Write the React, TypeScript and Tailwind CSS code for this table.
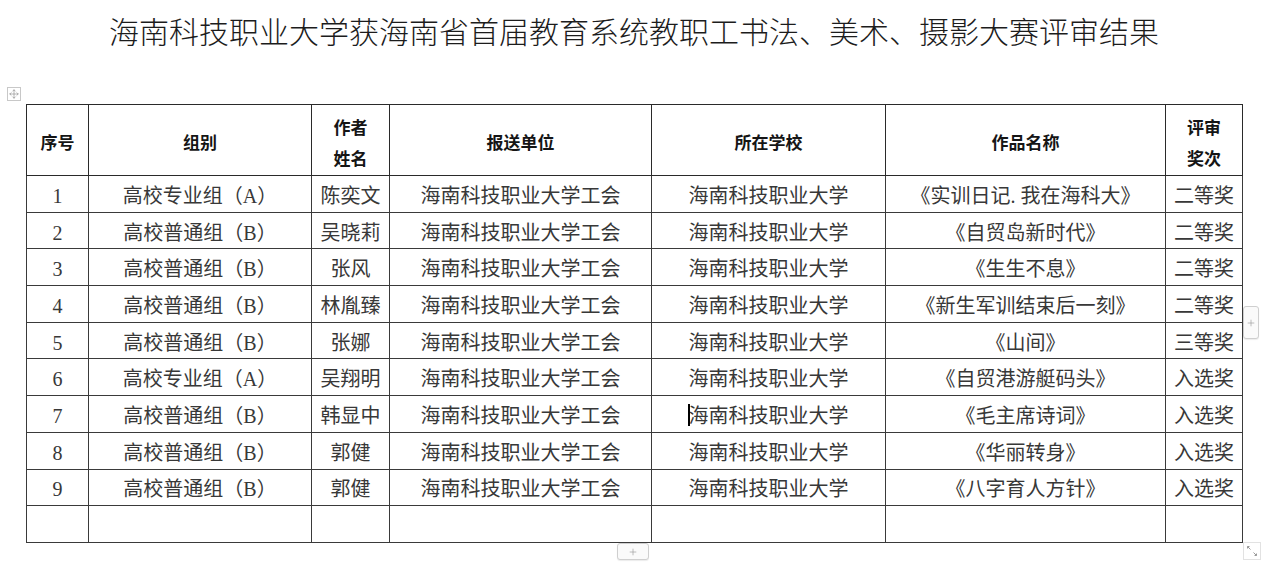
import { Move, Plus } from "lucide-react";

const rows = [
  { no: "1", group: "高校专业组（A）", name: "陈奕文", unit: "海南科技职业大学工会", school: "海南科技职业大学", work: "《实训日记. 我在海科大》", prize: "二等奖" },
  { no: "2", group: "高校普通组（B）", name: "吴晓莉", unit: "海南科技职业大学工会", school: "海南科技职业大学", work: "《自贸岛新时代》", prize: "二等奖" },
  { no: "3", group: "高校普通组（B）", name: "张风", unit: "海南科技职业大学工会", school: "海南科技职业大学", work: "《生生不息》", prize: "二等奖" },
  { no: "4", group: "高校普通组（B）", name: "林胤臻", unit: "海南科技职业大学工会", school: "海南科技职业大学", work: "《新生军训结束后一刻》", prize: "二等奖" },
  { no: "5", group: "高校普通组（B）", name: "张娜", unit: "海南科技职业大学工会", school: "海南科技职业大学", work: "《山间》", prize: "三等奖" },
  { no: "6", group: "高校专业组（A）", name: "吴翔明", unit: "海南科技职业大学工会", school: "海南科技职业大学", work: "《自贸港游艇码头》", prize: "入选奖" },
  { no: "7", group: "高校普通组（B）", name: "韩显中", unit: "海南科技职业大学工会", school: "海南科技职业大学", work: "《毛主席诗词》", prize: "入选奖" },
  { no: "8", group: "高校普通组（B）", name: "郭健", unit: "海南科技职业大学工会", school: "海南科技职业大学", work: "《华丽转身》", prize: "入选奖" },
  { no: "9", group: "高校普通组（B）", name: "郭健", unit: "海南科技职业大学工会", school: "海南科技职业大学", work: "《八字育人方针》", prize: "入选奖" },
];

const th = "border border-[#2a2a2a] pt-[7px] pb-0 text-center align-middle font-bold text-[17px] leading-[31px] text-[#151515]";
const td = "border border-[#3a3a3a] pt-[4px] pb-0 px-0 h-[36.7px] text-center align-middle text-[20px] leading-[24px] text-[#383838]";

export default function App() {
  return (
    <div
      className="min-h-[569px] w-[1268px] bg-white"
      style={{ fontFamily: '"Liberation Serif", "Noto Sans CJK SC", serif' }}
    >
      <h1
        className="pt-[10px] text-center text-[30px] leading-[40px] font-light text-[#1c1c1c]"
        style={{ fontFamily: '"Noto Sans CJK SC", sans-serif' }}
      >
        海南科技职业大学获海南省首届教育系统教职工书法、美术、摄影大赛评审结果
      </h1>

      <div className="relative ml-[26px] mt-[54px] w-[1216px]">
        {/* table move handle */}
        <div className="absolute -left-[19px] -top-[17px] flex h-[14px] w-[14px] items-center justify-center border border-[#c8c8c8] bg-white">
          <Move size={10} strokeWidth={1.5} className="text-[#8a8a8a]" />
        </div>

        <table className="w-[1216px] table-fixed border-collapse border border-[#111]">
          <colgroup>
            <col className="w-[62px]" />
            <col className="w-[223px]" />
            <col className="w-[78px]" />
            <col className="w-[262px]" />
            <col className="w-[234px]" />
            <col className="w-[280px]" />
            <col className="w-[77px]" />
          </colgroup>
          <thead>
            <tr className="h-[71px]">
              <th className={th}>序号</th>
              <th className={th}>组别</th>
              <th className={th}>
                作者
                <br />
                姓名
              </th>
              <th className={th}>报送单位</th>
              <th className={th}>所在学校</th>
              <th className={th}>作品名称</th>
              <th className={th}>
                评审
                <br />
                奖次
              </th>
            </tr>
          </thead>
          <tbody>
            {rows.map((r) => (
              <tr key={r.no}>
                <td className={td}>{r.no}</td>
                <td className={td}>{r.group}</td>
                <td className={td}>{r.name}</td>
                <td className={td}>{r.unit}</td>
                <td className={td}>
                  {r.no === "7" ? (
                    <span className="relative">
                      <span className="absolute -left-[1px] -top-[1px] h-[22px] w-[2px] bg-black" />
                      {r.school}
                    </span>
                  ) : (
                    r.school
                  )}
                </td>
                <td className={td}>{r.work}</td>
                <td className={td}>{r.prize}</td>
              </tr>
            ))}
            <tr>
              <td className={td} />
              <td className={td} />
              <td className={td} />
              <td className={td} />
              <td className={td} />
              <td className={td} />
              <td className={td} />
            </tr>
          </tbody>
        </table>

        {/* add column */}
        <div className="absolute left-[1217px] top-[202px] flex h-[33px] w-[16px] items-center justify-center rounded-[3px] border border-[#cfcfcf] bg-[#fafafa] shadow-[0_1px_1px_rgba(0,0,0,0.08)]">
          <Plus size={10} strokeWidth={1.5} className="text-[#999]" />
        </div>

        {/* add row */}
        <div className="absolute left-[591px] top-[439px] flex h-[17px] w-[32px] items-center justify-center rounded-[3px] border border-[#cfcfcf] bg-[#fafafa] shadow-[0_1px_1px_rgba(0,0,0,0.08)]">
          <Plus size={10} strokeWidth={1.5} className="text-[#999]" />
        </div>

        {/* resize handle */}
        <div className="absolute left-[1217px] top-[438px] flex h-[18px] w-[18px] items-center justify-center border border-[#e2e2e2] bg-white">
          <svg width="12" height="12" viewBox="0 0 12 12" fill="none" stroke="#9a9a9a" strokeWidth="1">
            <path d="M1.5 1.5 L4.5 4.5 M1.5 1.5 H3.5 M1.5 1.5 V3.5" />
            <path d="M10.5 10.5 L7.5 7.5 M10.5 10.5 H8.5 M10.5 10.5 V8.5" />
          </svg>
        </div>
      </div>
    </div>
  );
}
